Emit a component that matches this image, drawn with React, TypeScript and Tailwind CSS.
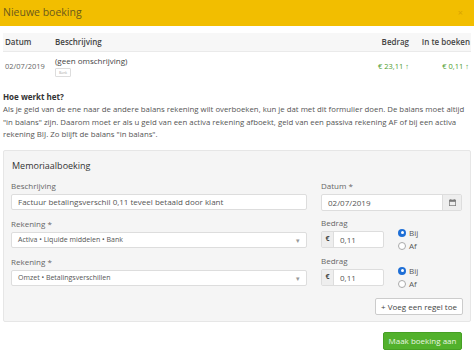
import React from 'react';

const font = { fontFamily: '"Open Sans", "Liberation Sans", sans-serif' };

function Caret() {
  return <span className="text-[7px] text-[#999] leading-none">▾</span>;
}

function Radio({ checked, label }: { checked?: boolean; label: string }) {
  return (
    <div className="flex items-center gap-[3px] h-[13px]">
      {checked ? (
        <span className="w-[8px] h-[8px] rounded-full bg-[#1f6fd6] flex items-center justify-center">
          <span className="w-[3px] h-[3px] rounded-full bg-white" />
        </span>
      ) : (
        <span className="w-[8px] h-[8px] rounded-full border border-[#aaa] bg-white" />
      )}
      <span className="text-[8px] text-[#555]">{label}</span>
    </div>
  );
}

function Label({ children }: { children: React.ReactNode }) {
  return <div className="h-[12px] leading-[12px] mb-[2px] text-[8px] text-[#666]">{children}</div>;
}

function AccountRow({ account }: { account: string }) {
  return (
    <div className="flex h-[30px] mt-[8px]">
      <div className="w-[296px]">
        <Label>Rekening *</Label>
        <div className="h-[16px] bg-white border border-[#ddd] rounded-[2px] flex items-center justify-between pl-[6px] pr-[6px]">
          <span className="text-[7px] text-[#555]">{account}</span>
          <Caret />
        </div>
      </div>
      <div className="ml-[14px] w-[63px]">
        <div className="-mt-[1px]">
          <Label>Bedrag</Label>
        </div>
        <div className="h-[17px] flex border border-[#ddd] rounded-[2px] bg-white">
          <div className="w-[12px] bg-[#eee] border-r border-[#ddd] flex items-center justify-center text-[7px] font-bold text-[#444]">€</div>
          <div className="flex items-center pl-[6px] text-[8px] text-[#555]">0,11</div>
        </div>
      </div>
      <div className="ml-[14px] pt-[8px]">
        <Radio checked label="Bij" />
        <Radio label="Af" />
      </div>
    </div>
  );
}

export default function App() {
  return (
    <div className="w-[474px] h-[359px] bg-white overflow-hidden" style={font}>
      {/* Header */}
      <div className="h-[26px] bg-[#f2be00] flex items-center justify-between px-[3px]">
        <span className="text-[10.5px] text-[#6b5a1c]">Nieuwe boeking</span>
        <span className="text-[9px] text-[#d9a400] mr-[8px]">×</span>
      </div>

      {/* Table */}
      <div className="mx-[3px] mt-[7px]">
        <div className="h-[19px] bg-[#f7f7f7] border-b border-[#eaeaea] flex items-center text-[8px] font-semibold text-[#444]">
          <span className="w-[52px] pl-[2px]">Datum</span>
          <span className="flex-1">Beschrijving</span>
          <span className="w-[60px] text-right">Bedrag</span>
          <span className="w-[62px] text-right pr-[1px]">In te boeken</span>
        </div>
        <div className="h-[30px] flex items-center">
          <span className="w-[52px] pl-[2px] text-[7.5px] text-[#666]">02/07/2019</span>
          <div className="flex-1 flex flex-col items-start -mt-[3px]">
            <span className="text-[8px] text-[#444] leading-[12px]">(geen omschrijving)</span>
            <span className="mt-[1px] border border-[#ddd] rounded-[1px] px-[3px] text-[3.5px] leading-[7px] text-[#aaa]">Bank</span>
          </div>
          <span className="w-[60px] text-right text-[7.5px] text-[#4e9c2a]">€ 23,11 ↑</span>
          <span className="w-[62px] text-right pr-[2px] text-[7.5px] text-[#4e9c2a]">€ 0,11 ↑</span>
        </div>
      </div>

      {/* Explanation */}
      <div className="px-[3px] mt-[9px]">
        <div className="text-[8px] font-bold text-[#333] leading-[12px]">Hoe werkt het?</div>
        <p className="text-[7.8px] text-[#555] leading-[12.7px]">
          Als je geld van de ene naar de andere balans rekening wilt overboeken, kun je dat met dit formulier doen. De balans moet altijd "in balans" zijn. Daarom moet er als u geld van een activa rekening afboekt, geld van een passiva rekening AF of bij een activa rekening BIJ. Zo blijft de balans "in balans".
        </p>
      </div>

      {/* Panel */}
      <div className="mx-[3px] mt-[9px] h-[172px] bg-[#f5f5f5] border border-[#e6e6e6] rounded-[2px] px-[7px]">
        <div className="h-[29px] flex items-center pl-[1px] text-[9px] text-[#333]">Memoriaalboeking</div>

        <div className="flex h-[30px]">
          <div className="w-[296px]">
            <Label>Beschrijving</Label>
            <div className="h-[16px] bg-white border border-[#ddd] rounded-[2px] flex items-center pl-[6px] text-[8px] text-[#555]">
              Factuur betalingsverschil 0,11 teveel betaald door klant
            </div>
          </div>
          <div className="ml-[14px] w-[141px]">
            <Label>Datum *</Label>
            <div className="h-[17px] flex bg-white border border-[#ddd] rounded-[2px]">
              <div className="flex-1 flex items-center pl-[6px] text-[8px] text-[#555]">02/07/2019</div>
              <div className="w-[19px] bg-[#eee] border-l border-[#ddd] flex items-center justify-center">
                <svg width="7" height="7" viewBox="0 0 10 10">
                  <rect x="0.5" y="1.5" width="9" height="8" fill="none" stroke="#777" />
                  <rect x="0.5" y="1.5" width="9" height="2.5" fill="#777" />
                  <rect x="2" y="0" width="1.2" height="2" fill="#777" />
                  <rect x="6.8" y="0" width="1.2" height="2" fill="#777" />
                </svg>
              </div>
            </div>
          </div>
        </div>

        <AccountRow account="Activa • Liquide middelen • Bank" />
        <AccountRow account="Omzet • Betalingsverschillen" />

        <div className="flex justify-end mt-[12px]">
          <div className="h-[17px] px-[5px] bg-white border border-[#ccc] rounded-[2px] flex items-center text-[8px] text-[#444]">
            + Voeg een regel toe
          </div>
        </div>
      </div>

      {/* Footer */}
      <div className="flex justify-end mt-[10px] pr-[12px]">
        <div className="h-[18px] w-[79px] bg-[#52b12c] border border-[#46a024] rounded-[2px] flex items-center justify-center text-[8px] text-[#eaf6e2]">
          Maak boeking aan
        </div>
      </div>
    </div>
  );
}
